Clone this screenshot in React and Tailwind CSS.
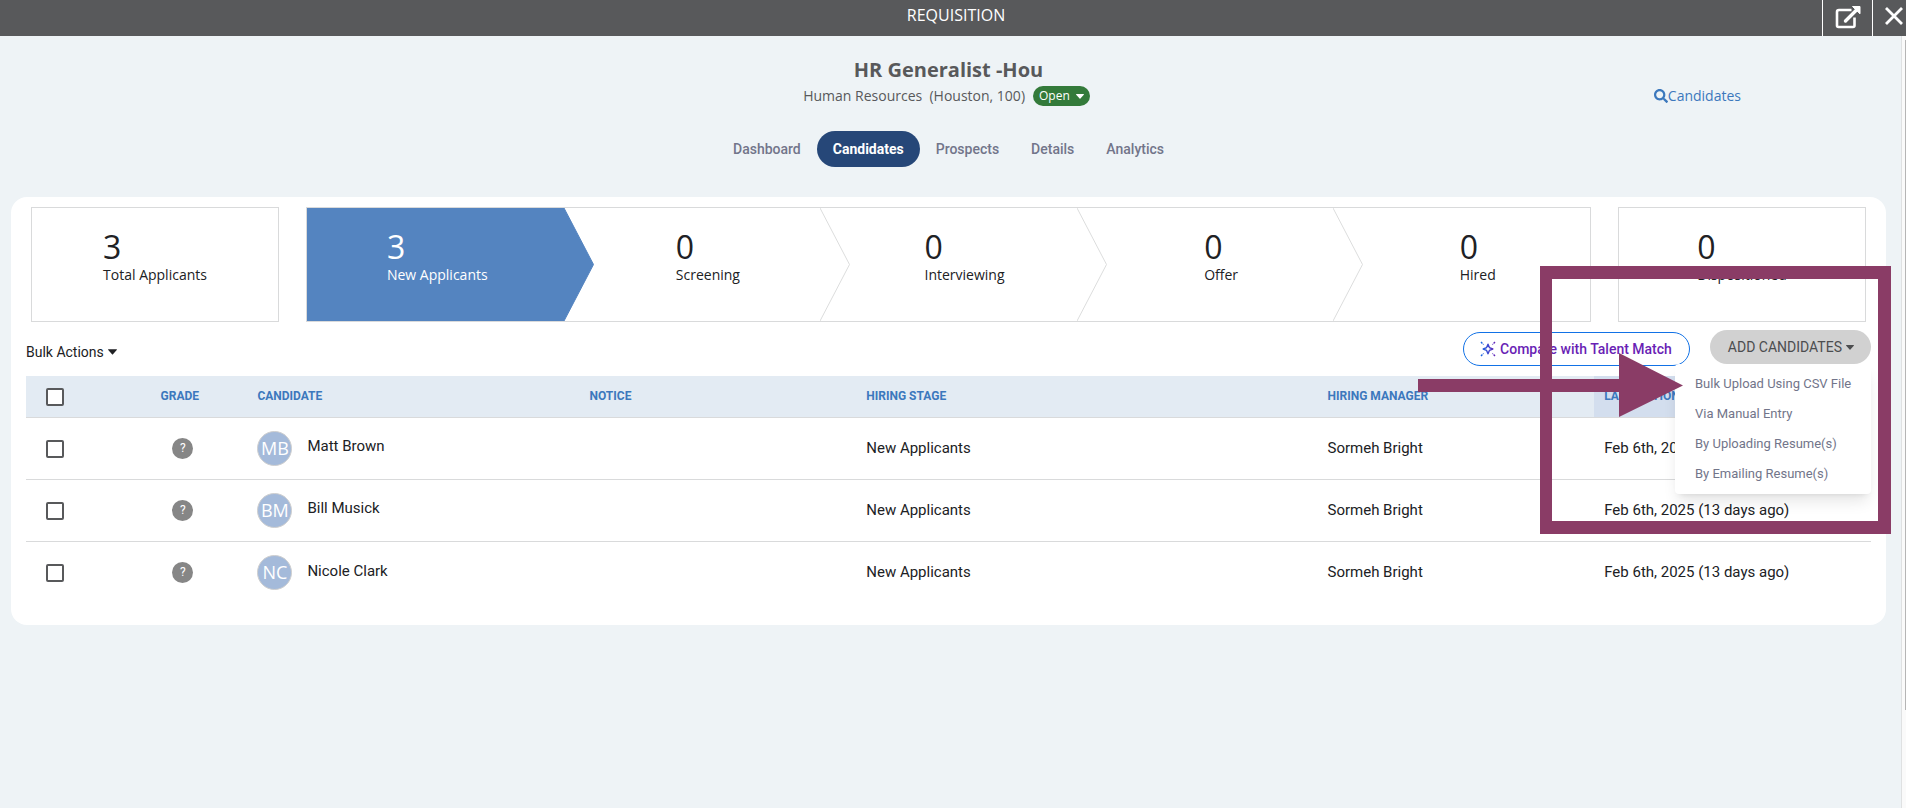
import { FaSearch } from "react-icons/fa";

const tabs = ["Dashboard", "Candidates", "Prospects", "Details", "Analytics"];

const stages = [
  { count: 3, label: "New Applicants" },
  { count: 0, label: "Screening" },
  { count: 0, label: "Interviewing" },
  { count: 0, label: "Offer" },
  { count: 0, label: "Hired" },
];

const columns = [
  { title: "GRADE", className: "w-[7%] pr-3.5 pl-2 text-center" },
  { title: "CANDIDATE", className: "w-[18%] px-2.5 text-left" },
  { title: "NOTICE", className: "w-[15%] px-2.5 text-left" },
  { title: "HIRING STAGE", className: "w-[25%] px-2.5 text-left" },
  { title: "HIRING MANAGER", className: "w-[15%] px-2.5 text-left" },
  { title: "LAST ACTION", className: "w-[15%] bg-[#d3deee] px-2.5 text-left" },
];

const candidates = [
  { name: "Matt Brown", initials: "MB" },
  { name: "Bill Musick", initials: "BM" },
  { name: "Nicole Clark", initials: "NC" },
];

const menuItems = [
  "Bulk Upload Using CSV File",
  "Via Manual Entry",
  "By Uploading Resume(s)",
  "By Emailing Resume(s)",
];

function Caret({ className }) {
  return (
    <svg viewBox="0 0 8 5" className={className} fill="currentColor" aria-hidden="true">
      <path d="M0.5 0h7a.4.4 0 0 1 .3.7L4.4 4.6a.5.5 0 0 1-.8 0L.2.7A.4.4 0 0 1 .5 0Z" />
    </svg>
  );
}

function TopBar() {
  return (
    <header className="flex h-9 items-stretch bg-[#58595b] text-white">
      <div className="w-[84px] shrink-0" />
      <h1 className="flex-1 pt-[3px] pl-1.5 text-center text-base leading-6">REQUISITION</h1>
      <button aria-label="Open in new window" className="flex w-[50px] shrink-0 justify-center border-l border-white pt-[5px]">
        <svg viewBox="0 0 26 24" className="h-6 w-[26px]" fill="none" stroke="currentColor" strokeWidth="2.6">
          <path d="M16.5 5H4a2 2 0 0 0-2 2v13.500a1.500 1.500 0 0 0 1.500 1.500H18a1.500 1.500 0 0 0 1.500-1.500V12.500" />
          <path d="M10.500 16 21.500 5" strokeWidth="3.400" strokeLinecap="round" />
          <path d="M17.500 1.500h7.500v7.300z" fill="currentColor" strokeWidth="1" strokeLinejoin="round" />
        </svg>
      </button>
      <button aria-label="Close" className="flex w-[34px] shrink-0 items-center border-l border-white pb-1 pl-3">
        <svg viewBox="0 0 18 18" className="h-[18px] w-[18px]" stroke="currentColor" strokeWidth="2.800">
          <path d="M1 1 17 17M17 1 1 17" />
        </svg>
      </button>
    </header>
  );
}

function JobHeader() {
  return (
    <div className="grid grid-cols-3 pt-5 pr-1 text-[#58595b]">
      <div className="col-start-2 flex flex-col items-center">
        <h2 className="text-xl leading-7 font-bold">HR Generalist -Hou</h2>
        <div className="flex items-center pr-1 text-sm leading-6">
          <span className="whitespace-pre">Human Resources  (Houston, 100)</span>
          <button className="ml-2 flex h-5 items-center gap-1.5 rounded-full bg-[#337a3a] px-1.5 text-xs text-white">
            Open
            <Caret className="h-[5px] w-2" />
          </button>
        </div>
      </div>
      <a href="#candidates" className="mt-7 mr-[156px] flex items-center justify-self-end text-sm leading-6 text-[#3c78bd]">
        <FaSearch className="size-3.5" />
        Candidates
      </a>
    </div>
  );
}

function Tabs() {
  return (
    <nav className="mt-[23px] flex justify-center pr-1 font-['Roboto',sans-serif] text-sm font-medium text-[#72758a]">
      {tabs.map((tab) => (
        <a
          key={tab}
          href={`#${tab.toLowerCase()}`}
          className={
            tab === "Candidates"
              ? "h-9 rounded-full bg-[#264778] px-4 leading-9 font-bold text-white"
              : "h-9 px-4 leading-9"
          }
        >
          {tab}
        </a>
      ))}
    </nav>
  );
}

function Count({ count, label }) {
  return (
    <span className="block text-left">
      <span className="block text-[32px] leading-10">{count}</span>
      <span className="block text-sm leading-4">{label}</span>
    </span>
  );
}

function Pipeline() {
  return (
    <div className="flex h-[115px] px-5 text-[#202124]">
      <button className="flex w-[248px] shrink-0 justify-center border border-[#d9dadb] pt-[19px]">
        <Count count={3} label="Total Applicants" />
      </button>
      <div className="mx-[27px] grid flex-1 grid-cols-5 border border-[#d9dadb]">
        {stages.map((stage, i) => (
          <button
            key={stage.label}
            className={
              i === 0
                ? "relative flex justify-center bg-[#5484c0] pt-[19px] pl-1 text-white"
                : "relative flex justify-center pt-[19px] pl-8"
            }
          >
            <Count {...stage} />
            {i < stages.length - 1 && (
              <svg
                viewBox="0 0 30 113"
                preserveAspectRatio="none"
                className="absolute top-0 left-full z-10 h-full w-[30px]"
                fill={i === 0 ? "#5484c0" : "#ffffff"}
                stroke={i === 0 ? "#5484c0" : "#dcdddd"}
              >
                <path d="M0 0 29.500 56.500 0 113" />
              </svg>
            )}
          </button>
        ))}
      </div>
      <button className="flex w-[248px] shrink-0 justify-center border border-[#d9dadb] pt-[19px]">
        <Count count={0} label="Dispositioned" />
      </button>
    </div>
  );
}

function SparkIcon() {
  return (
    <svg viewBox="0 0 16 16" className="size-4" fill="none" strokeWidth="1.400">
      <defs>
        <linearGradient id="spark" x1="0" y1="0" x2="16" y2="0" gradientUnits="userSpaceOnUse">
          <stop stopColor="#0f6fe8" />
          <stop offset="1" stopColor="#6a1fb5" />
        </linearGradient>
      </defs>
      <g stroke="url(#spark)">
        <path d="M8 3.200 9.400 6.600 12.800 8 9.400 9.400 8 12.800 6.600 9.400 3.200 8 6.600 6.600Z" strokeLinejoin="round" />
        <path d="M1 1 3.600 3.600M15 1 12.400 3.600M1 15 3.600 12.400M15 15 12.400 12.400" strokeDasharray="2 1" />
      </g>
    </svg>
  );
}

function AddMenu() {
  return (
    <div className="relative">
      <button className="flex h-[34px] items-center gap-1 rounded-full bg-[#d1d1d1] pr-[17px] pl-[18px] text-sm text-[#4c4d4f]">
        ADD CANDIDATES
        <Caret className="h-[5px] w-2" />
      </button>
      <ul className="absolute top-full right-0 z-20 w-49 rounded bg-white py-[5px] text-[13px] text-[#72758a] shadow-lg">
        {menuItems.map((item) => (
          <li key={item}>
            <button className="block h-[30px] w-full px-5 text-left whitespace-nowrap">{item}</button>
          </li>
        ))}
      </ul>
    </div>
  );
}

function Toolbar() {
  return (
    <div className="flex h-[42px] items-start px-[15px] pt-2 font-['Roboto',sans-serif]">
      <button className="mt-2 flex h-7 items-center gap-1 text-sm text-[#202124]">
        Bulk Actions
        <Caret className="h-1.5 w-[9px]" />
      </button>
      <button className="mt-0.5 ml-auto flex h-[34px] items-center gap-1 rounded-full border border-[#1272e6] pr-[17px] pl-4 text-sm font-medium text-[#6a1fb5]">
        <SparkIcon />
        Compare with Talent Match
      </button>
      <div className="ml-5">
        <AddMenu />
      </div>
    </div>
  );
}

function Checkbox({ label }) {
  return (
    <input
      type="checkbox"
      aria-label={label}
      className="mt-0.5 block size-[18px] appearance-none rounded-xs border-2 border-[#58595b] bg-white"
    />
  );
}

function CandidateTable() {
  return (
    <div className="px-[15px] font-['Roboto',sans-serif] text-[#202124]">
      <table className="mt-3 w-full table-fixed text-[15px]">
        <thead>
          <tr className="h-[41px] border-b border-[#d9dadb] bg-[#e3ebf3] text-xs text-[#3c78bd]">
            <th className="w-[5%] pl-5">
              <Checkbox label="Select all" />
            </th>
            {columns.map((column) => (
              <th key={column.title} className={column.className}>
                {column.title}
              </th>
            ))}
          </tr>
        </thead>
        <tbody>
          {candidates.map((candidate) => (
            <tr key={candidate.name} className="h-[62px] border-b border-[#d9dadb] last:border-b-0">
              <td className="pl-5">
                <Checkbox label={`Select ${candidate.name}`} />
              </td>
              <td>
                <span className="mx-auto flex size-[21px] items-center justify-center rounded-full bg-[#868686] text-xs text-white">
                  ?
                </span>
              </td>
              <td className="px-2.5">
                <div className="flex items-center gap-[15px]">
                  <span className="flex size-[35px] items-center justify-center rounded-full border border-[#cfcfcf] bg-[#a4bada] font-['Open_Sans',sans-serif] text-lg text-white">
                    {candidate.initials}
                  </span>
                  <a href="#candidate" className="pb-[3px]">
                    {candidate.name}
                  </a>
                </div>
              </td>
              <td />
              <td className="px-2.5">New Applicants</td>
              <td className="px-2.5">Sormeh Bright</td>
              <td className="px-2.5 whitespace-nowrap">Feb 6th, 2025 (13 days ago)</td>
            </tr>
          ))}
        </tbody>
      </table>
    </div>
  );
}

// highlight box and arrow drawn over the open menu
function Callout() {
  return (
    <svg
      viewBox="0 0 473 269"
      className="pointer-events-none absolute top-[266px] right-[15px] z-30 h-[269px] w-[473px]"
      fill="#8a3c66"
      aria-hidden="true"
    >
      <path d="M122 0H473V268H122ZM134 13V255H460V13Z" fillRule="evenodd" />
      <path d="M0 113H201V87L265 119.500 201 151V126H0Z" />
    </svg>
  );
}

export default function App() {
  return (
    <div className="relative flex min-h-screen flex-col bg-[#eef3f6] font-['Open_Sans',sans-serif]">
      <TopBar />
      <div className="flex flex-1">
        <main className="min-w-0 flex-1">
          <JobHeader />
          <Tabs />
          <section className="mt-[30px] mr-[15px] ml-[11px] rounded-2xl bg-white pt-2.5 pb-[22px]">
            <Pipeline />
            <Toolbar />
            <CandidateTable />
          </section>
        </main>
        <div className="flex w-[5px] shrink-0 justify-end border-l border-[#dfe1e2] bg-[#fafafa] pt-1">
          <div className="h-[670px] w-px bg-[#b5b5b5]" />
        </div>
      </div>
      <Callout />
    </div>
  );
}
